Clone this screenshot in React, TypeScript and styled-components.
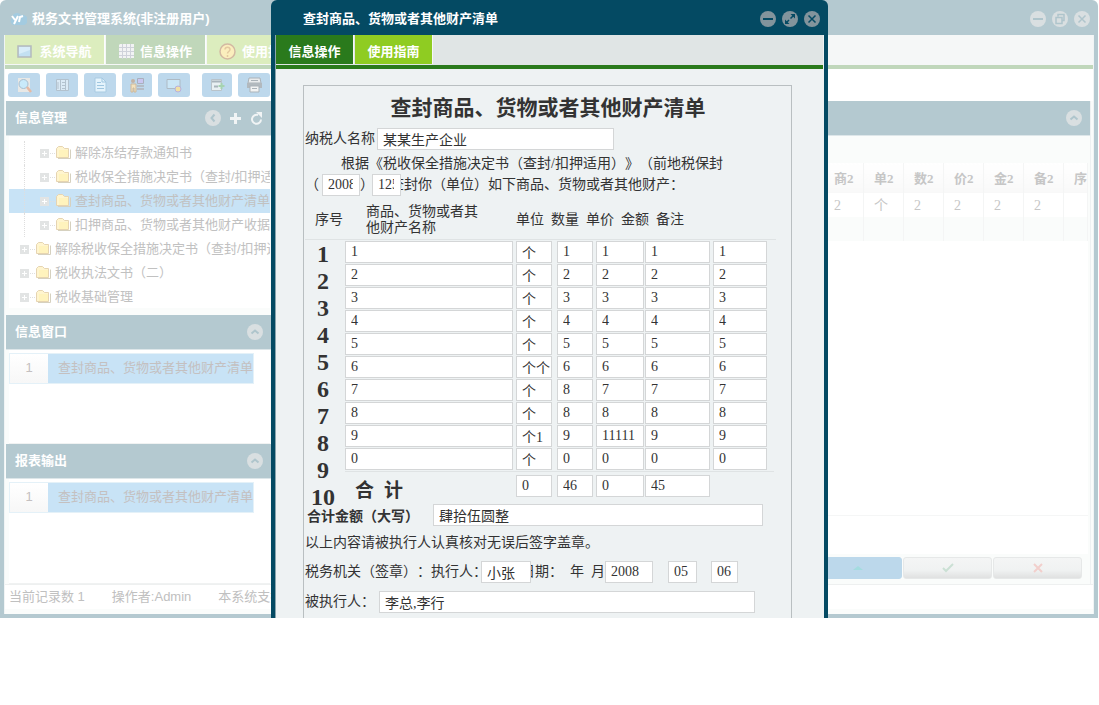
import React from "react";
import styled, { createGlobalStyle } from "styled-components";

const sans = `"Liberation Sans", "Noto Sans CJK SC", sans-serif`;
const song = `"Liberation Serif", "Noto Sans CJK SC", serif`;

const GlobalStyle = createGlobalStyle`
  *, *::before, *::after { box-sizing: border-box; }
  body { margin: 0; background: #fff; font: 13px/20px ${sans}; color: #333; text-spacing-trim: space-all; }
  button { font: inherit; border: 0; padding: 0; margin: 0; background: none; cursor: pointer; }
  h1, h2, h3, p, ol, ul { margin: 0; padding: 0; font-size: inherit; font-weight: inherit; list-style: none; }
  svg { display: block; flex: none; }
`;

const Stage = styled.div`
  position: relative;
  overflow: hidden;
`;

/* ---------- background window ---------- */

const Window = styled.section`
  display: flex;
  flex-direction: column;
  margin-right: 1px;
  padding: 0 4px 4px;
  background: #b4c9d0;
  border-radius: 6px 6px 0 0;
`;

const TitleBar = styled.header<{ $inset: number }>`
  display: flex;
  flex: none;
  align-items: center;
  gap: 5px;
  height: 35px;
  padding: 2px 4px 0 ${(p) => p.$inset}px;
  color: #fff;
  font-weight: bold;
`;

const TitleText = styled.h1`
  flex: 1;
  font-weight: bold;
  white-space: nowrap;
`;

const WindowButtons = styled.div`
  display: flex;
  gap: 6px;
`;

const RoundButton = styled.button<{ $bg: string }>`
  display: grid;
  place-items: center;
  width: 16px;
  height: 16px;
  border-radius: 50%;
  background: ${(p) => p.$bg};
`;

const TabBar = styled.nav<{ $bg: string; $line: string; $edge: string }>`
  display: flex;
  flex: none;
  gap: 2px;
  height: 34px;
  background: ${(p) => p.$bg};
  border-bottom: 4px solid ${(p) => p.$line};
  box-shadow: 0 1px 0 ${(p) => p.$edge};
  padding-bottom: 1px;
`;

const Tab = styled.button<{ $bg: string; $width: number }>`
  display: flex;
  align-items: center;
  justify-content: center;
  gap: 6px;
  width: ${(p) => p.$width}px;
  padding-top: 4px;
  color: #fff;
  font-weight: bold;
  white-space: nowrap;
  background: ${(p) => p.$bg};
  box-shadow: 1px 0 0 rgba(255, 255, 255, 0.7);
`;

const WindowBody = styled.div`
  background: #fafcfb;
  border: solid #f0f4f5;
  border-width: 0 1px;
  padding-bottom: 5px;
`;

const Toolbar = styled.div`
  display: flex;
  gap: 6px;
  height: 32px;
  padding: 4px 3px;
  background: #fff;
`;

const ToolButton = styled.button<{ $apart?: boolean; $narrow?: boolean }>`
  display: grid;
  place-items: center;
  width: ${(p) => (p.$narrow ? 30 : 32)}px;
  height: 24px;
  margin-left: ${(p) => (p.$apart ? 6 : 0)}px;
  border-radius: 3px;
  background: #bdd8ec;
`;

const Columns = styled.div`
  display: flex;
  gap: 5px;
  padding: 0 2px 0 1px;
`;

const Sidebar = styled.aside`
  display: flex;
  flex-direction: column;
  flex: none;
  width: 265px;
`;

const PanelHeader = styled.header`
  display: flex;
  flex: none;
  align-items: center;
  gap: 8px;
  height: 35px;
  padding: 0 8px 0 9px;
  background: #b4c9d0;
  border-bottom: 1px solid #dde6e9;
  color: #fff;
`;

const PanelTitle = styled.h2`
  flex: 1;
  font-weight: bold;
`;

const TreeBox = styled.ul`
  height: 179px;
  margin: 0 1px 0 3px;
  padding-top: 5px;
  background: #fff;
  border-bottom: 7px solid #fafcfb;
  color: #c1c1c1;
  overflow: hidden;
`;

const TreeRow = styled.li<{ $level: number; $active?: boolean }>`
  display: flex;
  align-items: center;
  height: 24px;
  padding-left: ${(p) => (p.$level === 2 ? 15 : 11)}px;
  white-space: nowrap;
  background: ${(p) => (p.$active ? "#c8e3f6" : "none")};
`;

const Guide = styled.span`
  flex: none;
  align-self: stretch;
  width: 16px;
  border-left: 1px dotted #dedede;
`;

const TreeLabel = styled.span`
  flex: none;
  margin-left: 3px;
`;

const ListBox = styled.div<{ $height: number }>`
  height: ${(p) => p.$height}px;
  margin: 0 1px 0 3px;
  padding-top: 3px;
  background: #fff;
  border-bottom: 1px solid #f0f2f2;
`;

const ListRow = styled.div`
  display: flex;
  width: 245px;
  height: 31px;
  border: 1px solid #e4f1f8;
  color: #c4c0c0;
  line-height: 28px;
  white-space: nowrap;
`;

const ListIndex = styled.span`
  width: 39px;
  text-align: center;
  background: linear-gradient(#fff, #f7f7f7);
`;

const ListName = styled.span`
  flex: 1;
  padding-left: 10px;
  background: #c8e3f6;
`;

const Main = styled.main`
  display: flex;
  flex: 1;
  flex-direction: column;
  min-width: 0;
  border-right: 1px solid #eef1f2;
`;

const GridBox = styled.div`
  flex: 1;
  margin: 27px 2px 0 0;
  background: #fff;
  border-bottom: 1px solid #f5f6f6;
`;

const RecordTable = styled.table`
  width: 100%;
  table-layout: fixed;
  border-collapse: collapse;
  color: #c6c6c6;
  font: 14px/20px ${song};

  th, td {
    width: 40px;
    height: 24px;
    padding: 2px 0 0 10px;
    border-right: 1px solid #f4f5f5;
    text-align: left;
    font-size: 14px;
    white-space: nowrap;
    overflow: hidden;
  }
  th { height: 30px; background: linear-gradient(#fff, #f8f8f8); font-size: 13px; }
  th:first-child { width: auto; }
  th:last-child { width: 24px; }
  tr:last-child td { background: #fafcfb; }
`;

const GridFooter = styled.div`
  height: 38px;
  margin-right: 2px;
  background: #fff;
`;

const ActionRow = styled.div`
  display: flex;
  justify-content: flex-end;
  gap: 1px;
  height: 30px;
  padding: 3px 8px 5px;
`;

const ActionButton = styled.button<{ $primary?: boolean }>`
  display: grid;
  place-items: center;
  width: 89px;
  height: 22px;
  border-radius: 3px;
  border: 1px solid ${(p) => (p.$primary ? "#bcd8eb" : "#e6e8e8")};
  background: ${(p) => (p.$primary ? "#bcd8eb" : "linear-gradient(#f4f5f5, #f0f2f2 60%, #e0e1e1)")};
`;

const StatusBar = styled.footer`
  display: flex;
  gap: 27px;
  height: 25px;
  padding: 2px 4px 0;
  background: #fff;
  border-top: 1px solid #eef0f0;
  color: #c0c0c0;
  white-space: nowrap;
`;

/* ---------- dialog ---------- */

const Overlay = styled.div`
  position: absolute;
  inset: 0;
  display: flex;
  justify-content: center;
`;

const Dialog = styled.section`
  display: flex;
  flex-direction: column;
  width: 557px;
  padding: 0 4px;
  background: #044a63;
  border-radius: 6px 6px 0 0;
`;

const DialogBody = styled.div`
  flex: 1;
  min-height: 0;
  padding: 16px 31px 0 27px;
  background: #eef2f3;
  overflow: hidden;
`;

const DialogFrame = styled.div`
  display: flex;
  flex: 1;
  flex-direction: column;
  min-height: 0;
  padding-right: 1px;
  border-left: 1px solid #8aa5ae;
  background: #eef2f3;
`;

const Form = styled.form`
  height: 600px;
  padding-left: 1px;
  border: 1px solid #b9bfc1;
  font: 14px/22px ${song};
  color: #333;
  white-space: nowrap;
`;

const FormTitle = styled.h2`
  height: 42px;
  font-size: 21px;
  font-weight: bold;
  line-height: 44px;
  text-align: center;
`;

const Line = styled.div<{ $gap?: number }>`
  display: flex;
  align-items: center;
  height: 22px;
  margin-top: ${(p) => p.$gap ?? 0}px;
`;

const Field = styled.input<{ $w: number; $l?: number; $r?: number; $clip?: boolean }>`
  display: block;
  position: relative;
  flex: none;
  width: ${(p) => p.$w}px;
  height: 22px;
  margin: 0 ${(p) => p.$r ?? 0}px 0 ${(p) => p.$l ?? 0}px;
  padding: 0 ${(p) => (p.$clip ? 6 : 1)}px 0 5px;
  border: 1px solid #d4d6d7;
  border-radius: 0;
  background: #fff;
  color: #333;
  font: 14px/20px ${song};
  outline: none;
`;

const Paragraph = styled.p`
  padding-left: 36px;
  margin-top: 3px;
  height: 21px;
`;

const FormLabel = styled.label<{ $w?: number; $bold?: boolean }>`
  flex: none;
  width: ${(p) => (p.$w ? `${p.$w}px` : "auto")};
  padding: ${(p) => (p.$bold ? "4px 0 0 2px" : 0)};
  font-weight: ${(p) => (p.$bold ? "bold" : "normal")};
`;

const ItemHead = styled.div`
  display: flex;
  align-items: center;
  gap: 7px;
  height: 44px;
  margin-right: 15px;
  padding: 4px 0 0 10px;
  border-bottom: 1px solid #dfe3e4;
  line-height: 16px;
`;

const HeadName = styled.span`
  width: 143px;
  margin-left: 16px;
  white-space: pre-line;
`;

const Items = styled.div`
  display: flex;
  height: 256px;
  padding-top: 1px;
`;

const Numbers = styled.ol`
  width: 40px;
  padding-right: 4px;
  font-size: 24px;
  font-weight: bold;
  line-height: 27px;
  text-align: center;
`;

const ItemTable = styled.table`
  width: 422px;
  table-layout: fixed;
  border-collapse: collapse;

  td { height: 23px; padding: 0; vertical-align: top; }
`;

const ItemColumn = styled.div`
  flex: 1;
  min-width: 0;
`;

const Totals = styled.div`
  display: flex;
  margin-right: 17px;
  padding-top: 3px;
  border-top: 1px solid #dfe3e4;
`;

const TotalTitle = styled.strong`
  display: flex;
  gap: 10px;
  width: 171px;
  padding: 5px 0 0 10px;
  font-size: 19px;
`;

/* ---------- icons ---------- */

type Glyph = "min" | "max" | "restore" | "close" | "up" | "left";

const glyphs: Record<Glyph, React.ReactNode> = {
  min: <path d="M3 8h10" />,
  max: (
    <>
      <path d="M8.500 7.500l3-3M7 9l-3 3" strokeWidth="1.500" />
      <path d="M8.500 3H13v4.500zM3 8.500V13h4.500z" fill="#044a63" stroke="none" />
    </>
  ),
  restore: <path d="M6 5.500v-2h6v6h-2M4 6.500h6v6H4z" strokeWidth="1.500" />,
  close: <path d="M4.500 4.500l7 7M11.500 4.500l-7 7" strokeWidth="1.500" />,
  up: <path d="M4.500 9.500L8 6.500l3.500 3" />,
  left: <path d="M9.500 4.500L6.500 8l3 3.500" />,
};

const Control = ({ glyph, label, bg, fg }: { glyph: Glyph; label: string; bg: string; fg: string }) => (
  <RoundButton type="button" aria-label={label} $bg={bg}>
    <svg width="16" height="16" viewBox="0 0 16 16" fill="none" stroke={fg} strokeWidth="2">
      {glyphs[glyph]}
    </svg>
  </RoundButton>
);

const Faded = ({ glyph, label }: { glyph: Glyph; label: string }) => (
  <Control glyph={glyph} label={label} bg="#d9dfe1" fg="#afc5cc" />
);

const Logo = () => (
  <svg width="17" height="14" viewBox="0 0 17 14">
    <path d="M4 13a4 4 0 0 1-2-7 5 5 0 0 1 9-3 4 4 0 0 1 3 10z" fill="#a3cbe0" />
    <path d="M2 4l3 4M8 4l-4 8M9 10l1-5 3-1" stroke="#fff" strokeWidth="2" fill="none" />
  </svg>
);

const ScreenIcon = () => (
  <svg width="16" height="14" viewBox="0 0 16 14">
    <path d="M1 1h13v11H1z" fill="#c3e0f2" stroke="#b4b9bd" strokeWidth="1.500" />
    <path d="M2 2h11v3L2 9z" fill="#d9edf9" />
  </svg>
);

const GridIcon = () => (
  <svg width="15" height="15" viewBox="0 0 15 15">
    <path d="M1 0h14v14H0V1z" fill="#f2f3f4" />
    <path d="M0 3.500h15M0 7.500h15M0 11.500h15M3.500 0v15M7.500 0v15M11.500 0v15" stroke="#cfd2da" />
  </svg>
);

const HelpIcon = () => (
  <svg width="17" height="17" viewBox="0 0 17 17">
    <circle cx="8.500" cy="8.500" r="7.500" fill="#fbeebd" stroke="#d3b9a2" strokeWidth="1.500" />
    <path d="M6 6.500c0-3 5-3 5 0 0 2-2.500 2-2.500 4M8.500 12v2" fill="none" stroke="#e3c9a0" strokeWidth="1.500" />
  </svg>
);

const Plus = () => (
  <svg width="13" height="13" viewBox="0 0 13 13">
    <path d="M6.500 1v11M1 6.500h11" stroke="#f1f4f5" strokeWidth="3" />
  </svg>
);

const Refresh = () => (
  <svg width="13" height="14" viewBox="0 0 13 14">
    <path d="M11 8.500A4.500 4.500 0 1 1 8 4" fill="none" stroke="#f1f4f5" strokeWidth="2" />
    <path d="M6 1h6v6z" fill="#f1f4f5" />
  </svg>
);

const Expander = () => (
  <svg width="15" height="9" viewBox="0 0 15 9">
    <path d="M0 0h9v9H0z" fill="#e2e4e4" />
    <path d="M4.500 2v5M2 4.500h5" stroke="#fff" />
    <path d="M10 4.500h5" stroke="#e0e0e0" strokeDasharray="1 1" />
  </svg>
);

const Folder = () => (
  <svg width="17" height="17" viewBox="0 0 17 17">
    <path d="M1.500 12.500v-9l2-2h4l2 2h4v9z" fill="#fff5cf" stroke="#e6d4b1" />
    <path d="M3 13.500h12.500V4.500" fill="none" stroke="#d6d1bf" />
    <path d="M4 5h9v7H4z" fill="#fff3bd" />
  </svg>
);

const toolIcons: { label: string; art: React.ReactNode }[] = [
  {
    label: "查询",
    art: (
      <>
        <path d="M2 1h12v14H2z" fill="#e8e8e6" />
        <circle cx="7.500" cy="7" r="4.500" fill="#c9eafa" stroke="#a8bfd0" />
        <path d="M11 10l4 5" stroke="#e5b9a4" strokeWidth="2.500" />
      </>
    ),
  },
  {
    label: "表单",
    art: (
      <>
        <path d="M2.500 2.500h12v11h-12z" fill="#dbeaf5" stroke="#b3c2ce" />
        <path d="M6.500 3v10M11.500 3v10M8 5.500h3M8 8.500h3M8 11.500h3M4 5v7" stroke="#b3c2ce" />
      </>
    ),
  },
  {
    label: "文档",
    art: (
      <>
        <path d="M3 1h7l4 4v10H3z" fill="#e4f3fc" stroke="#a9cbe2" />
        <path d="M10 1v4h4M5 5.500h4M5 8.500h7M5 11.500h7" fill="none" stroke="#9fc6e0" />
      </>
    ),
  },
  {
    label: "用户",
    art: (
      <>
        <circle cx="4" cy="4" r="2" fill="#c3b3a4" />
        <path d="M2 7h5v8H5v-4H4v4H2z" fill="#f3e2bd" stroke="#ccb89c" />
        <path d="M8.500 1.500h6v5h-6z" fill="#c9c6f0" stroke="#aab0bd" />
        <path d="M8 9h7M8 12h7" stroke="#b4bcc6" strokeWidth="2" />
      </>
    ),
  },
  {
    label: "显示",
    art: (
      <>
        <path d="M1 2.500h13v9H1z" fill="#cbe6f6" stroke="#aebac4" />
        <circle cx="12" cy="12" r="3" fill="#f0e0a6" stroke="#b7b0dd" />
      </>
    ),
  },
  {
    label: "导出",
    art: (
      <>
        <path d="M2.500 2.500h10v11h-10z" fill="#e9f0f3" stroke="#b9c3ca" />
        <path d="M3 4.500h9M5 9.500h4" stroke="#a9b4bc" strokeWidth="2" />
        <path d="M12.500 6v6M9.500 9h6" stroke="#a6d3b0" strokeWidth="2" />
      </>
    ),
  },
  {
    label: "打印",
    art: (
      <>
        <path d="M3 1h11l1 5H2z" fill="#e9ebec" stroke="#abb3b9" />
        <path d="M1 6h15v5H1z" fill="#b2b9be" />
        <path d="M4 9h9v6H4z" fill="#f2f3f3" stroke="#abb3b9" />
        <path d="M6 11.500h5M5 3.500h7" stroke="#abb3b9" />
      </>
    ),
  },
];

/* ---------- data ---------- */

const tree = [
  { level: 2, label: "解除冻结存款通知书" },
  { level: 2, label: "税收保全措施决定书（查封/扣押适" },
  { level: 2, label: "查封商品、货物或者其他财产清单", active: true },
  { level: 2, label: "扣押商品、货物或者其他财产收据" },
  { level: 1, label: "解除税收保全措施决定书（查封/扣押适" },
  { level: 1, label: "税收执法文书（二）" },
  { level: 1, label: "税收基础管理" },
];

const recordHeads = ["", "商2", "单2", "数2", "价2", "金2", "备2", "序"];
const recordRows = [
  ["", "2", "个", "2", "2", "2", "2", ""],
  ["", "", "", "", "", "", "", ""],
];

const columns = [
  { name: "商品名称", cell: 171, input: 168 },
  { name: "单位", cell: 41, input: 36 },
  { name: "数量", cell: 39, input: 36 },
  { name: "单价", cell: 49, input: 48 },
  { name: "金额", cell: 68, input: 65 },
  { name: "备注", cell: 54, input: 54 },
];

const items = [
  ["1", "个", "1", "1", "1", "1"],
  ["2", "个", "2", "2", "2", "2"],
  ["3", "个", "3", "3", "3", "3"],
  ["4", "个", "4", "4", "4", "4"],
  ["5", "个", "5", "5", "5", "5"],
  ["6", "个个", "6", "6", "6", "6"],
  ["7", "个", "8", "7", "7", "7"],
  ["8", "个", "8", "8", "8", "8"],
  ["9", "个1", "9", "11111", "9", "9"],
  ["0", "个", "0", "0", "0", "0"],
];

const listName = "查封商品、货物或者其他财产清单";

const SideList = ({ title, height }: { title: string; height: number }) => (
  <>
    <PanelHeader>
      <PanelTitle>{title}</PanelTitle>
      <Faded glyph="up" label="折叠" />
    </PanelHeader>
    <ListBox $height={height}>
      <ListRow>
        <ListIndex>1</ListIndex>
        <ListName>{listName}</ListName>
      </ListRow>
    </ListBox>
  </>
);

const BackWindow = () => (
  <Window>
    <TitleBar $inset={6}>
      <Logo />
      <TitleText>税务文书管理系统(非注册用户)</TitleText>
      <WindowButtons>
        <Faded glyph="min" label="最小化" />
        <Faded glyph="restore" label="还原" />
        <Faded glyph="close" label="关闭" />
      </WindowButtons>
    </TitleBar>
    <WindowBody>
      <TabBar $bg="#f5f7f7" $line="#c0d7bb" $edge="#e8efe9">
        <Tab type="button" $bg="#dcedbe" $width={99}><ScreenIcon />系统导航</Tab>
        <Tab type="button" $bg="#c0d7ba" $width={99}><GridIcon />信息操作</Tab>
        <Tab type="button" $bg="#dcedbe" $width={99}><HelpIcon />使用指南</Tab>
      </TabBar>
      <Toolbar>
        {toolIcons.map((t, i) => (
          <ToolButton key={t.label} type="button" aria-label={t.label} $apart={i === 5} $narrow={i === 3 || i === 5}>
            <svg width="17" height="16" viewBox="0 0 17 16">{t.art}</svg>
          </ToolButton>
        ))}
      </Toolbar>
      <Columns>
        <Sidebar>
          <PanelHeader>
            <PanelTitle>信息管理</PanelTitle>
            <Faded glyph="left" label="收起" />
            <button type="button" aria-label="新增"><Plus /></button>
            <button type="button" aria-label="刷新"><Refresh /></button>
          </PanelHeader>
          <TreeBox>
            {tree.map((n) => (
              <TreeRow key={n.label} $level={n.level} $active={n.active}>
                {n.level === 2 && <Guide />}
                <Expander />
                <Folder />
                <TreeLabel>{n.label}</TreeLabel>
              </TreeRow>
            ))}
          </TreeBox>
          <SideList title="信息窗口" height={94} />
          <SideList title="报表输出" height={105} />
        </Sidebar>
        <Main>
          <PanelHeader>
            <PanelTitle />
            <Faded glyph="up" label="折叠" />
          </PanelHeader>
          <GridBox>
            <RecordTable>
              <thead>
                <tr>{recordHeads.map((h, i) => <th key={i}>{h}</th>)}</tr>
              </thead>
              <tbody>
                {recordRows.map((r, i) => (
                  <tr key={i}>{r.map((c, j) => <td key={j}>{c}</td>)}</tr>
                ))}
              </tbody>
            </RecordTable>
          </GridBox>
          <GridFooter />
          <ActionRow>
            <ActionButton type="button" $primary aria-label="上移">
              <svg width="10" height="6" viewBox="0 0 10 6"><path d="M0 5l5-4 5 4z" fill="#a3dcdf" /></svg>
            </ActionButton>
            <ActionButton type="button" aria-label="确定">
              <svg width="12" height="10" viewBox="0 0 12 10">
                <path d="M1 5l3 3 7-7" fill="none" stroke="#cbe0d4" strokeWidth="2" />
              </svg>
            </ActionButton>
            <ActionButton type="button" aria-label="取消">
              <svg width="10" height="10" viewBox="0 0 10 10">
                <path d="M1 1l8 8M9 1L1 9" stroke="#f2cfcc" strokeWidth="2" />
              </svg>
            </ActionButton>
          </ActionRow>
        </Main>
      </Columns>
      <StatusBar>
        <span>当前记录数 1</span>
        <span>操作者:Admin</span>
        <span>本系统支持</span>
      </StatusBar>
    </WindowBody>
  </Window>
);

const controlColors = { bg: "#82949c", fg: "#044a63" };

const SeizureDialog = () => (
  <Overlay>
    <Dialog role="dialog" aria-labelledby="dialog-title">
      <TitleBar $inset={28}>
        <TitleText id="dialog-title">{listName}</TitleText>
        <WindowButtons>
          <Control glyph="min" label="最小化" {...controlColors} />
          <Control glyph="max" label="最大化" {...controlColors} />
          <Control glyph="close" label="关闭" {...controlColors} />
        </WindowButtons>
      </TitleBar>
      <DialogFrame>
        <TabBar $bg="#e0e5e5" $line="#2a7a1c" $edge="#c3d6c2">
          <Tab type="button" $bg="#2a7a1c" $width={77}>信息操作</Tab>
          <Tab type="button" $bg="#8fcc22" $width={77}>使用指南</Tab>
        </TabBar>
        <DialogBody>
          <Form>
            <FormTitle>{listName}</FormTitle>
            <Line>
              <FormLabel $w={72} htmlFor="payer">纳税人名称</FormLabel>
              <Field id="payer" $w={237} defaultValue="某某生产企业" />
            </Line>
            <Paragraph>根据《税收保全措施决定书（查封/扣押适用）》（前地税保封</Paragraph>
            <Line>
              （
              <Field aria-label="年度" $w={38} $l={3} $clip defaultValue="2008" />
              ）
              <Field aria-label="文号" $w={29} $l={-2} $r={-11} $clip defaultValue="125" />
              查封你（单位）如下商品、货物或者其他财产：
            </Line>
            <ItemHead>
              <span>序号</span>
              <HeadName>{"商品、货物或者其\n他财产名称"}</HeadName>
              {["单位", "数量", "单价", "金额", "备注"].map((h) => <span key={h}>{h}</span>)}
            </ItemHead>
            <Items>
              <Numbers>
                {items.map((_, i) => <li key={i}>{i + 1}</li>)}
              </Numbers>
              <ItemColumn>
                <ItemTable>
                  <colgroup>
                    {columns.map((c) => <col key={c.name} width={c.cell} />)}
                  </colgroup>
                  <tbody>
                    {items.map((row, i) => (
                      <tr key={i}>
                        {row.map((value, j) => (
                          <td key={j}>
                            <Field aria-label={`${columns[j].name} ${i + 1}`} $w={columns[j].input} defaultValue={value} />
                          </td>
                        ))}
                      </tr>
                    ))}
                  </tbody>
                </ItemTable>
                <Totals>
                  <TotalTitle><span>合</span><span>计</span></TotalTitle>
                  <Field aria-label="合计单位" $w={36} $r={5} defaultValue="0" />
                  <Field aria-label="合计数量" $w={36} $r={3} defaultValue="46" />
                  <Field aria-label="合计单价" $w={48} $r={1} defaultValue="0" />
                  <Field aria-label="合计金额" $w={65} defaultValue="45" />
                </Totals>
              </ItemColumn>
            </Items>
            <Line $gap={8}>
              <FormLabel $w={128} $bold htmlFor="total">合计金额（大写）</FormLabel>
              <Field id="total" $w={330} defaultValue="肆拾伍圆整" />
            </Line>
            <Line $gap={6}>以上内容请被执行人认真核对无误后签字盖章。</Line>
            <Line $gap={7}>
              <FormLabel htmlFor="officer">税务机关（签章）：执行人：</FormLabel>
              <Field id="officer" $w={50} $l={-6} $r={-10} defaultValue="小张" />
              日期：&nbsp;&nbsp;年&nbsp;&nbsp;月
              <Field aria-label="年" $w={48} defaultValue="2008" />
              <Field aria-label="月" $w={29} $l={15} defaultValue="05" />
              <Field aria-label="日" $w={27} $l={14} defaultValue="06" />
            </Line>
            <Line $gap={8}>
              <FormLabel $w={74} htmlFor="executed">被执行人：</FormLabel>
              <Field id="executed" $w={376} defaultValue="李总,李行" />
            </Line>
          </Form>
        </DialogBody>
      </DialogFrame>
    </Dialog>
  </Overlay>
);

export default function App() {
  return (
    <>
      <GlobalStyle />
      <Stage>
        <BackWindow />
        <SeizureDialog />
      </Stage>
    </>
  );
}
